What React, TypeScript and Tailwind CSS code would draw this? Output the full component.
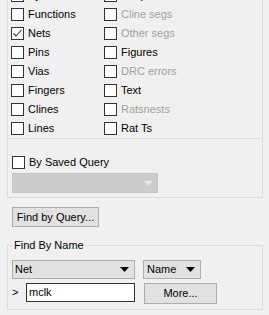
import React from 'react';

type Item = { label: string; enabled?: boolean; checked?: boolean };

const rows: [Item, Item][] = [
  [{ label: 'Symbols', enabled: true }, { label: 'Shapes', enabled: true }],
  [{ label: 'Functions', enabled: true }, { label: 'Cline segs' }],
  [{ label: 'Nets', enabled: true, checked: true }, { label: 'Other segs' }],
  [{ label: 'Pins', enabled: true }, { label: 'Figures', enabled: true }],
  [{ label: 'Vias', enabled: true }, { label: 'DRC errors' }],
  [{ label: 'Fingers', enabled: true }, { label: 'Text', enabled: true }],
  [{ label: 'Clines', enabled: true }, { label: 'Ratsnests' }],
  [{ label: 'Lines', enabled: true }, { label: 'Rat Ts', enabled: true }],
];

function Box({ enabled = true, checked = false }: { enabled?: boolean; checked?: boolean }) {
  return (
    <span
      className={`flex h-[13px] w-[13px] shrink-0 items-center justify-center border ${
        enabled ? 'border-[#333333] bg-white' : 'border-[#cccccc] bg-[#f7f7f7]'
      }`}
    >
      {checked && (
        <svg width="11" height="11" viewBox="0 0 11 11">
          <polyline points="1.5,5.5 4,8 9.5,2" fill="none" stroke="#333" strokeWidth="1.1" />
        </svg>
      )}
    </span>
  );
}

function Arrow({ light = false }: { light?: boolean }) {
  return (
    <svg width="9" height="5" viewBox="0 0 9 5">
      <polygon points="0,0 9,0 4.5,5" fill={light ? '#e8e8e8' : '#000'} />
    </svg>
  );
}

function Check({ item }: { item: Item }) {
  return (
    <div className="flex h-[19px] items-center gap-[4px]">
      <Box enabled={item.enabled} checked={item.checked} />
      <span className={item.enabled ? 'text-black' : 'text-[#a0a0a0]'}>{item.label}</span>
    </div>
  );
}

export default function App() {
  return (
    <div
      className="h-[315px] w-[269px] overflow-hidden bg-[#f0f0f0] pl-[7px] pr-[6px] text-[11px] leading-[13px] text-black"
      style={{ fontFamily: '"Liberation Sans", Arial, sans-serif' }}
    >
      <div className="-mt-[14px] border-x border-b border-[#dcdcdc]">
        <div className="grid grid-cols-[93px_1fr] pl-[3px]">
          {rows.map(([a, b]) => (
            <React.Fragment key={a.label}>
              <Check item={a} />
              <Check item={b} />
            </React.Fragment>
          ))}
        </div>
        <div className="flex flex-col gap-[4px] border-t border-[#dcdcdc] pb-[4px] pl-[4px] pt-[17px]">
          <div className="flex h-[13px] items-center gap-[4px]">
            <Box />
            <span>By Saved Query</span>
          </div>
          <div className="flex h-[20px] w-[146px] items-center justify-end border border-[#c4c4c4] bg-[#cccccc] pr-[4px]">
            <Arrow light />
          </div>
        </div>
      </div>

      <button className="ml-[5px] mt-[9px] flex h-[20px] w-[87px] items-center justify-center border border-[#adadad] bg-[#e1e1e1]">
        Find by Query...
      </button>

      <fieldset className="mt-[12px] border border-[#dcdcdc] pb-[5px]">
        <legend className="ml-[5px] px-[1px]">Find By Name</legend>
        <div className="mt-[8px] flex flex-col gap-[4px] pl-[4px]">
          <div className="flex gap-[8px]">
            <div className="flex h-[19px] w-[123px] items-center justify-between border border-[#adadad] bg-[#e1e1e1] pl-[2px] pr-[5px]">
              <span>Net</span>
              <Arrow />
            </div>
            <div className="flex h-[19px] w-[58px] items-center justify-between border border-[#adadad] bg-[#e1e1e1] pl-[3px] pr-[5px]">
              <span>Name</span>
              <Arrow />
            </div>
          </div>
          <div className="flex items-start">
            <span className="flex h-[19px] w-[14px] items-center">&gt;</span>
            <div className="flex h-[19px] w-[109px] items-center border border-[#333333] bg-white pl-[2px]">mclk</div>
            <button className="ml-[9px] flex h-[21px] w-[73px] items-center justify-center border border-[#adadad] bg-[#e1e1e1]">
              More...
            </button>
          </div>
        </div>
      </fieldset>
    </div>
  );
}
